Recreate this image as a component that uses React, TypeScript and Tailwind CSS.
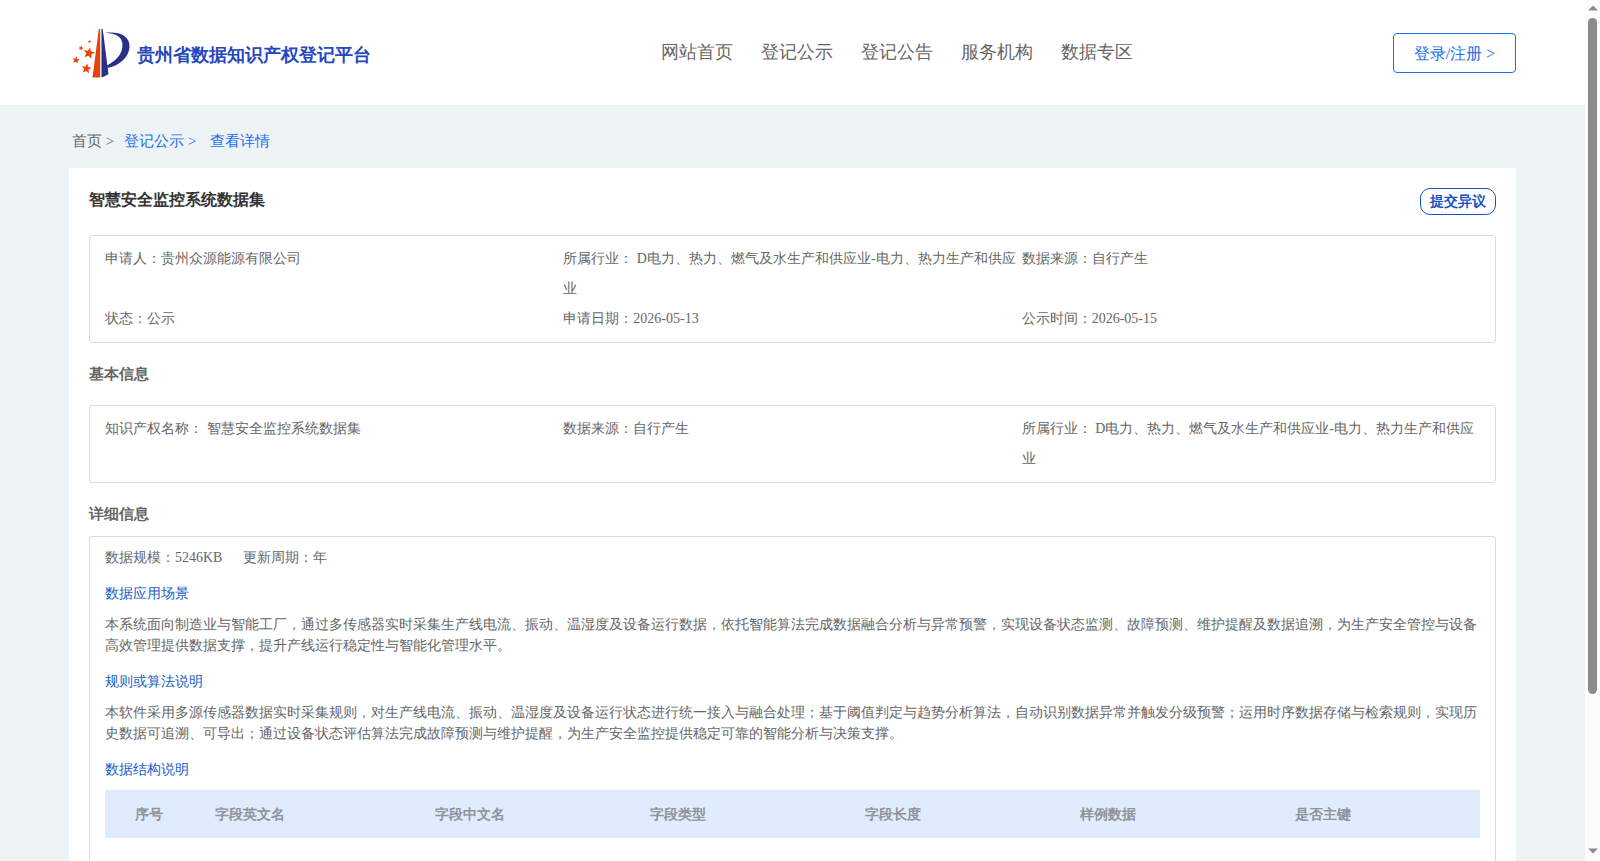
import React from "react";

const summary = [
  "申请人：贵州众源能源有限公司",
  "所属行业： D电力、热力、燃气及水生产和供应业-电力、热力生产和供应业",
  "数据来源：自行产生",
  "状态：公示",
  "申请日期：2026-05-13",
  "公示时间：2026-05-15",
];

const basics = [
  "知识产权名称： 智慧安全监控系统数据集",
  "数据来源：自行产生",
  "所属行业： D电力、热力、燃气及水生产和供应业-电力、热力生产和供应业",
];

const navItems = ["网站首页", "登记公示", "登记公告", "服务机构", "数据专区"];

const columns = [
  { label: "序号", style: "w-[110px] pl-[30px]" },
  { label: "字段英文名", style: "w-[220px]" },
  { label: "字段中文名", style: "w-[215px]" },
  { label: "字段类型", style: "w-[215px]" },
  { label: "字段长度", style: "w-[215px]" },
  { label: "样例数据", style: "w-[215px]" },
  { label: "是否主键", style: "w-[185px]" },
];

function Logo() {
  return (
    <svg viewBox="0 0 58 50" className="h-[50px] w-[58px]" aria-hidden="true">
      <defs>
        <polygon id="star" points="0,-5 1.4,-1.6 5,-1.5 2.2,0.8 3.1,4.4 0,2.4 -3.1,4.4 -2.2,0.8 -5,-1.5 -1.4,-1.6" />
      </defs>
      <path d="M26.800 1 L28.200 1 L28.200 49.500 L20.500 49.500 Z" fill="#e8430f" />
      <path d="M29.500 1 L30.700 1 L36.500 46 Q33 48.500 29.500 49.500 Z" fill="#283088" />
      <path
        d="M33 4.800 C46 3 57.500 7 57.500 18 C57.500 30 46 38 35.500 40 L35 37.500 C43 33 50.500 27 50.500 17 C50.500 9 44 5.500 33 4.800 Z"
        fill="#283088"
      />
      <g fill="#e8430f">
        <use href="#star" transform="translate(17 25) rotate(12) scale(1.150)" />
        <use href="#star" transform="translate(4 32) rotate(10) scale(0.750)" />
        <use href="#star" transform="translate(14.500 40.500) rotate(8) scale(1)" />
        <use href="#star" transform="translate(9 20) rotate(20) scale(0.500)" />
        <use href="#star" transform="translate(17.500 13.500) scale(0.350)" />
      </g>
    </svg>
  );
}

function InfoBox({ items }: { items: string[] }) {
  return (
    <ul className="grid grid-cols-3 rounded-[3px] border border-[#dcdcdc] px-[15px] py-2 leading-[30px]">
      {items.map((item) => (
        <li key={item}>{item}</li>
      ))}
    </ul>
  );
}

function Detail({ title, children }: { title: string; children: React.ReactNode }) {
  return (
    <section className="mt-[15px] leading-[21px]">
      <h3 className="mb-2.5 text-[#1a5cc8]">{title}</h3>
      {children}
    </section>
  );
}

export default function App() {
  return (
    <div className="flex h-screen overflow-hidden bg-[#eef3f6] font-['Liberation_Serif',serif] text-sm text-[#666]">
      <div className="min-w-0 flex-1 overflow-hidden">
        <header className="flex h-[105px] items-center justify-between bg-white px-[69px]">
          <a href="#" className="flex items-center gap-[7px] pl-[3px] text-lg font-bold text-[#2548bc]">
            <Logo />
            <span className="pt-1">贵州省数据知识产权登记平台</span>
          </a>
          <nav className="ml-[30px] flex gap-7 pb-0.5 text-lg">
            {navItems.map((item) => (
              <a key={item} href="#">
                {item}
              </a>
            ))}
          </nav>
          <button className="h-10 w-[123px] rounded border border-[#1a6ef0] pt-0.5 text-base text-[#1a6ef0]">
            登录/注册 &gt;
          </button>
        </header>

        <div className="px-[69px]">
          <nav className="flex h-[63px] items-center pt-2.5 pl-[3px] text-[15px]">
            <a href="#">首页 &gt;</a>
            <a href="#" className="ml-2.5 text-[#1a6ef0]">登记公示 &gt;</a>
            <span className="ml-3.5 text-[#1a6ef0]">查看详情</span>
          </nav>

          <main className="bg-white p-5">
            <div className="mb-5 flex justify-between">
              <h1 className="text-base leading-6 font-bold text-[#333]">智慧安全监控系统数据集</h1>
              <button className="h-[27px] w-[76px] rounded-[10px] border border-[#1653c4] font-bold text-[#1653c4]">
                提交异议
              </button>
            </div>
            <InfoBox items={summary} />

            <h2 className="py-5 text-[15px] leading-[22px] font-bold">基本信息</h2>
            <InfoBox items={basics} />

            <h2 className="pt-5 pb-[11px] text-[15px] leading-[22px] font-bold">详细信息</h2>
            <div className="rounded-[3px] border border-[#dcdcdc] px-[15px] pt-2.5 pb-5">
              <p className="flex gap-[21px] leading-[21px]">
                <span>数据规模：5246KB</span>
                <span>更新周期：年</span>
              </p>
              <Detail title="数据应用场景">
                <p>
                  本系统面向制造业与智能工厂，通过多传感器实时采集生产线电流、振动、温湿度及设备运行数据，依托智能算法完成数据融合分析与异常预警，实现设备状态监测、故障预测、维护提醒及数据追溯，为生产安全管控与设备高效管理提供数据支撑，提升产线运行稳定性与智能化管理水平。
                </p>
              </Detail>
              <Detail title="规则或算法说明">
                <p>
                  本软件采用多源传感器数据实时采集规则，对生产线电流、振动、温湿度及设备运行状态进行统一接入与融合处理；基于阈值判定与趋势分析算法，自动识别数据异常并触发分级预警；运用时序数据存储与检索规则，实现历史数据可追溯、可导出；通过设备状态评估算法完成故障预测与维护提醒，为生产安全监控提供稳定可靠的智能分析与决策支撑。
                </p>
              </Detail>
              <Detail title="数据结构说明">
                <table className="w-full table-fixed text-left text-[#909399]">
                  <thead>
                    <tr className="h-12 bg-[#dfecfe]">
                      {columns.map((column) => (
                        <th key={column.label} className={column.style}>
                          {column.label}
                        </th>
                      ))}
                    </tr>
                  </thead>
                  <tbody>
                    <tr className="h-[60px]">
                      <td colSpan={7} className="text-center">
                        暂无数据
                      </td>
                    </tr>
                  </tbody>
                </table>
              </Detail>
            </div>
          </main>
        </div>
      </div>

      <div className="flex w-[15px] shrink-0 flex-col items-center bg-[#fcfcfc] pt-[5px] pb-[7px]" aria-hidden="true">
        <svg viewBox="0 0 10 6" className="h-[6px] w-[10px] fill-[#8b8b8b]">
          <path d="M0 5.500 L5 0.500 L10 5.500 Z" />
        </svg>
        <div className="mt-[7px] w-[9px] flex-[676] rounded-full bg-[#8b8b8b]" />
        <div className="flex-[154]" />
        <svg viewBox="0 0 10 6" className="h-[6px] w-[10px] fill-[#8b8b8b]">
          <path d="M0 0.500 L5 5.500 L10 0.500 Z" />
        </svg>
      </div>
    </div>
  );
}
